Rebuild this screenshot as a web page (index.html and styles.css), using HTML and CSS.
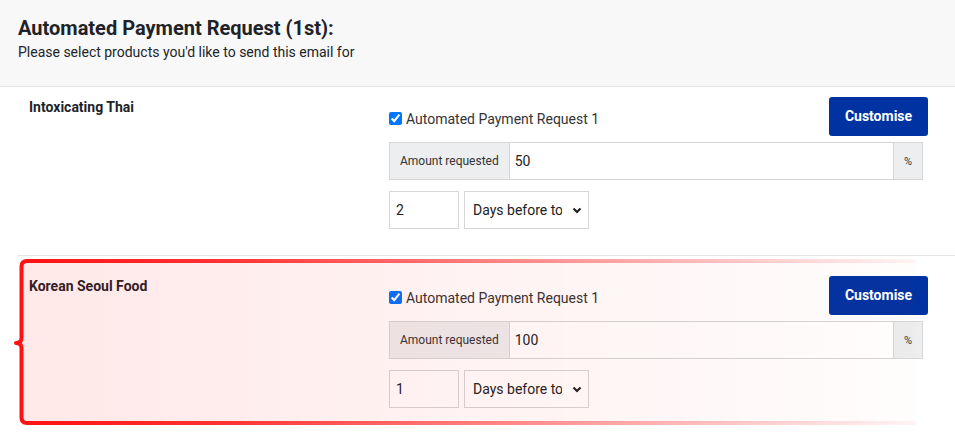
FILE: index.html
```html
<!DOCTYPE html>
<html lang="en">
<head>
  <meta charset="UTF-8">
  <title>Automated Payment Request</title>
  <link rel="stylesheet" href="styles.css">
</head>
<body>
  <div class="intro">
    <h1>Automated Payment Request (1st):</h1>
    <p>Please select products you'd like to send this email for</p>
  </div>

  <div class="product first">
    <div class="product-name">Intoxicating Thai</div>
    <div class="product-settings">
      <div class="settings-top">
        <label class="check"><input type="checkbox" checked>Automated Payment Request 1</label>
        <button class="btn-customise">Customise</button>
      </div>
      <div class="input-group">
        <span class="addon">Amount requested</span>
        <input class="amount" type="text" value="50">
        <span class="addon addon-end">%</span>
      </div>
      <div class="timing">
        <input class="days" type="text" value="2">
        <div class="select-wrap">
          <select><option>Days before tour</option><option>Days after booking</option></select>
          <svg class="chevron" width="10" height="7" viewBox="0 0 10 7"><path d="M1.5 1.5 L5 5 L8.5 1.5" fill="none" stroke="#222" stroke-width="2.2"/></svg>
        </div>
      </div>
    </div>
  </div>

  <div class="product">
    <div class="product-name">Korean Seoul Food</div>
    <div class="product-settings">
      <div class="settings-top">
        <label class="check"><input type="checkbox" checked>Automated Payment Request 1</label>
        <button class="btn-customise">Customise</button>
      </div>
      <div class="input-group">
        <span class="addon">Amount requested</span>
        <input class="amount" type="text" value="100">
        <span class="addon addon-end">%</span>
      </div>
      <div class="timing">
        <input class="days" type="text" value="1">
        <div class="select-wrap">
          <select><option>Days before tour</option><option>Days after booking</option></select>
          <svg class="chevron" width="10" height="7" viewBox="0 0 10 7"><path d="M1.5 1.5 L5 5 L8.5 1.5" fill="none" stroke="#222" stroke-width="2.2"/></svg>
        </div>
      </div>
    </div>

    <!-- highlight drawn over the second product -->
    <svg class="highlight" width="906" height="171" viewBox="0 0 906 171">
      <defs>
        <linearGradient id="edge" gradientUnits="userSpaceOnUse" x1="0" y1="0" x2="904" y2="0">
          <stop offset="0" stop-color="#ff1010" stop-opacity="1"/>
          <stop offset="0.25" stop-color="#ff2020" stop-opacity="0.9"/>
          <stop offset="1" stop-color="#ff4040" stop-opacity="0.05"/>
        </linearGradient>
        <linearGradient id="wash" gradientUnits="userSpaceOnUse" x1="0" y1="0" x2="904" y2="0">
          <stop offset="0" stop-color="#ff0000" stop-opacity="0.09"/>
          <stop offset="1" stop-color="#ff0000" stop-opacity="0.01"/>
        </linearGradient>
      </defs>
      <rect x="9.5" y="4" width="894" height="162" fill="url(#wash)"/>
      <path d="M904 4 H15 Q9.5 4 9.5 9.5 V81 Q9.5 86 4 86 Q9.5 86 9.5 91 V160.5 Q9.5 166 15 166 H904" fill="none" stroke="url(#edge)" stroke-width="4" stroke-linejoin="round"/>
    </svg>
  </div>
</body>
</html>
```

FILE: styles.css
```css
body {
  margin: 0;
  font-family: Roboto, 'Liberation Sans', sans-serif;
  font-size: 14px;
  color: #212529;
  background: #fff;
  overflow: hidden;
}
.intro {
  background: #f8f8f8;
  border-bottom: 1px solid #e4e4e4;
  padding: 16px 18px 0;
  height: 70px;
}
.intro h1 {
  margin: 0;
  font-size: 20px;
  line-height: 24px;
  font-weight: 700;
  color: #1e2329;
}
.intro p {
  margin: 3px 0 0;
  line-height: 18px;
}
.product {
  position: relative;
  display: grid;
  grid-template-columns: 371px 539px;
  margin-left: 18px;
  padding: 20px 0 26px;
  border-bottom: 1px solid #e4e4e4;
}
.product.first {
  padding-top: 10px;
}
.product-name {
  padding: 1px 0 0 11px;
  font-weight: 700;
  line-height: 18px;
  color: #1e2329;
}
.settings-top {
  display: flex;
  align-items: center;
  justify-content: space-between;
}
.check {
  display: flex;
  align-items: center;
  gap: 4px;
  padding-top: 4px;
  color: #333;
}
.check input {
  margin: 0;
  width: 13px;
  height: 13px;
}
.btn-customise {
  width: 99px;
  height: 39px;
  border: none;
  border-radius: 3px;
  background: #0033a1;
  color: #fff;
  font-family: inherit;
  font-size: 14px;
  font-weight: 700;
  padding: 0 0 1px;
}
.input-group {
  display: flex;
  width: 534px;
  height: 38px;
  margin-top: 6px;
  border: 1px solid #d6d6d6;
  box-sizing: border-box;
}
.addon {
  display: flex;
  align-items: center;
  padding: 0 10px;
  background: #eceeef;
  font-size: 12px;
  color: #333;
}
.addon:first-child {
  border-right: 1px solid #d6d6d6;
}
.addon-end {
  border-left: 1px solid #d6d6d6;
  padding: 0 10px;
  font-size: 11px;
}
.amount {
  flex: 1;
  border: none;
  outline: none;
  padding: 0 5px;
  font-family: inherit;
  font-size: 14px;
  color: #222;
  background: #fff;
}
.timing {
  display: flex;
  gap: 5px;
  margin-top: 11px;
}
.days {
  width: 70px;
  height: 38px;
  box-sizing: border-box;
  border: 1px solid #d6d6d6;
  padding: 0 6px;
  font-family: inherit;
  font-size: 14px;
  color: #222;
}
.select-wrap {
  position: relative;
}
.select-wrap select {
  appearance: none;
  width: 125px;
  height: 38px;
  border: 1px solid #d6d6d6;
  border-radius: 0;
  background: #fff;
  padding: 0 26px 0 8px;
  font-family: inherit;
  font-size: 14px;
  color: #222;
}
.chevron {
  position: absolute;
  right: 7px;
  top: 16px;
  pointer-events: none;
}
.highlight {
  position: absolute;
  left: -6px;
  top: 1px;
  pointer-events: none;
}
```
